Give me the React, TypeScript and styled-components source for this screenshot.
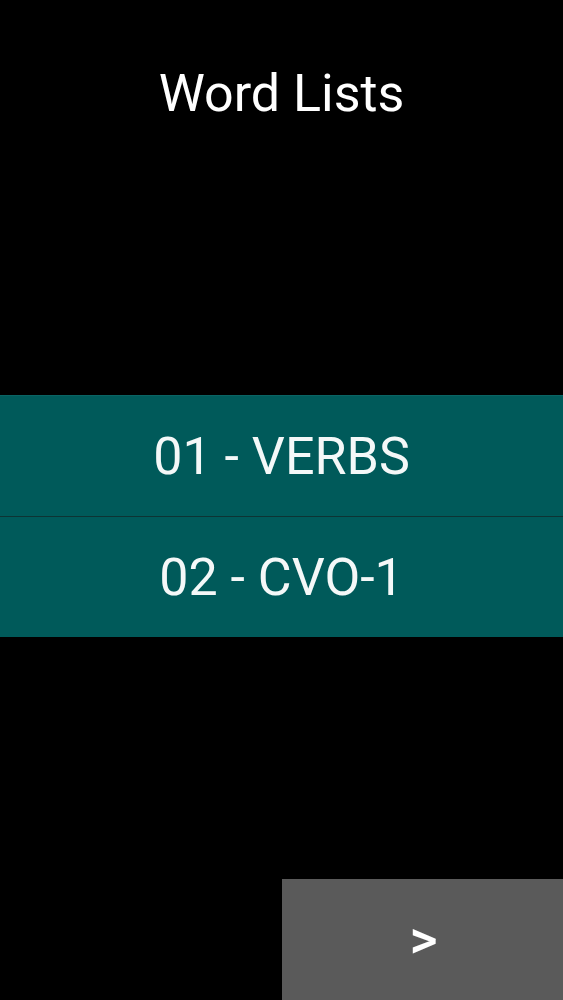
import React from "react";
import styled, { createGlobalStyle } from "styled-components";

const GlobalStyle = createGlobalStyle`
  html, body {
    margin: 0;
    padding: 0;
    background: #000000;
  }

  body {
    font-family: Roboto, "Noto Sans", "Liberation Sans", sans-serif;
  }
`;

const lists = ["01 - VERBS", "02 - CVO-1"];

export default function App() {
  return (
    <>
      <GlobalStyle />
      <Screen>
        <Title>Word Lists</Title>

        <ListContainer>
          {lists.map((name, i) => (
            <ListRow key={name} first={i === 0}>
              {name}
            </ListRow>
          ))}
        </ListContainer>

        <Footer>
          <NextButton>&gt;</NextButton>
        </Footer>
      </Screen>
    </>
  );
}

const Screen = styled.div`
  display: flex;
  flex-direction: column;
  width: 100%;
  height: 1000px;
  background: #000000;
  color: #ffffff;
  overflow: hidden;
`;

const Title = styled.h1`
  margin: 0;
  padding-top: 64px;
  height: 60px;
  line-height: 60px;

  text-align: center;
  font-size: 52px;
  font-weight: 400;
  color: #ffffff;
`;

const ListContainer = styled.div`
  display: flex;
  flex-direction: column;
  align-items: stretch;
  margin-top: 271px;
`;

const ListRow = styled.button<{ first?: boolean }>`
  display: flex;
  align-items: center;
  justify-content: center;

  height: 121px;
  padding: 0;
  margin: 0;

  background-color: #005a5a;
  color: #f4f8f8;

  border: none;
  border-top: 1px solid ${(props) => (props.first ? "#0a6464" : "#0d3434")};

  font-family: Roboto, "Noto Sans", "Liberation Sans", sans-serif;
  font-size: 52px;
  font-weight: 400;
  cursor: pointer;
`;

const Footer = styled.div`
  display: flex;
  flex-direction: row;
  justify-content: flex-end;
  margin-top: auto;
`;

const NextButton = styled.button`
  display: flex;
  align-items: center;
  justify-content: center;

  width: 281px;
  height: 121px;
  padding: 0 0 0 2px;
  margin: 0;

  background-color: #5a5a5a;
  color: #ffffff;
  border: none;

  font-family: Roboto, "Noto Sans", "Liberation Sans", sans-serif;
  font-size: 54px;
  font-weight: 500;
  cursor: pointer;
`;
